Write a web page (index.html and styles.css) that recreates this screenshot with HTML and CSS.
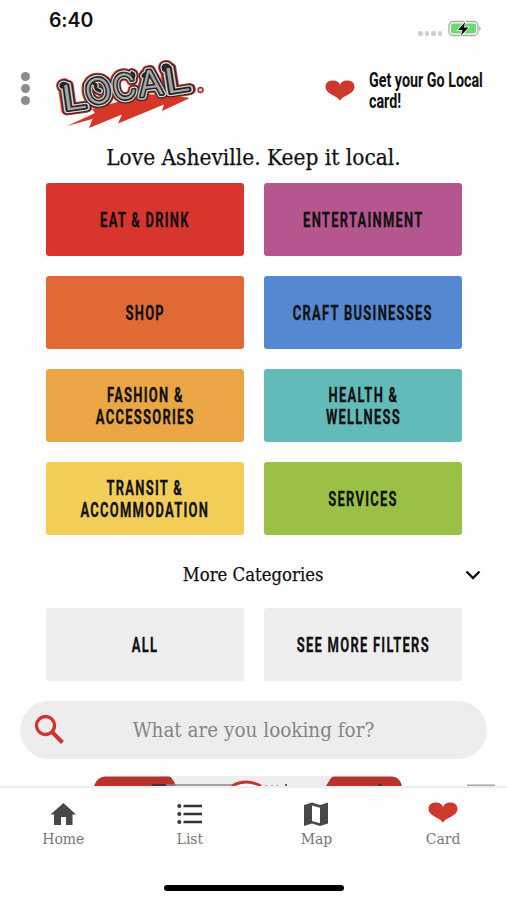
FILE: index.html
```html
<!DOCTYPE html>
<html lang="en">
<head>
<meta charset="utf-8">
<title>Go Local Asheville</title>
<link rel="stylesheet" href="styles.css">
</head>
<body>
<div class="status">
  <span class="clock">6:40</span>
  <div class="status-icons">
    <span class="signal"><i></i><i></i><i></i><i></i></span>
    <svg class="battery" width="34" height="18" viewBox="0 0 34 18"><rect x="1" y="1.500" width="29" height="14" rx="4" fill="#fff" stroke="#aaa" stroke-width="1.300"/><rect x="3" y="3.500" width="25" height="10" rx="2" fill="#6bdb6d"/><path d="M31.500 6q2 2.500 0 5z" fill="#777"/><path d="M17 2 10 10h4.500L13 15.500 20.500 7.500H16z" fill="#000" stroke="#fff" stroke-width="1.600" paint-order="stroke"/></svg>
  </div>
</div>
<header class="header">
  <div class="dots"><i></i><i></i><i></i></div>
  <svg class="logo" width="154" height="76" viewBox="0 0 154 76" role="img" aria-label="Local">
    <path d="M15 70 43 57 40 53 95 38 136 41.500 137 42.500 110 55 112 48.500 66 67.500 70 58.500 37 72 40.500 63z" fill="#d53626"/>
    <defs>
      <g id="wordmark">
        <text transform="translate(11.500 55) rotate(-8)" textLength="25" lengthAdjust="spacingAndGlyphs">L</text>
        <path d="M15 34Q15 26.500 11 27.500 8 28.500 9.500 31"/>
        <text transform="translate(35.500 50) rotate(-12)" textLength="27" lengthAdjust="spacingAndGlyphs">O</text>
        <path d="M48 35Q42 33 44 29 39 24 35 29"/>
        <text transform="translate(62.500 45) rotate(-10)" textLength="24" lengthAdjust="spacingAndGlyphs">C</text>
        <path d="M81 22q2-4-1-5"/>
        <text transform="translate(87.500 41) rotate(-7)" textLength="25" lengthAdjust="spacingAndGlyphs">A</text>
        <path d="M97 18Q93 16 91 20"/>
        <text transform="translate(114 38) rotate(-9)" textLength="26" lengthAdjust="spacingAndGlyphs">L</text>
        <path d="M117.500 19Q119 9 114 9 109.500 9.500 112 14"/>
      </g>
    </defs>
    <use href="#wordmark" class="mark-red"/>
    <use href="#wordmark" class="mark-edge"/>
    <use href="#wordmark" class="mark-light"/>
    <use href="#wordmark" class="mark-black"/>
    <use href="#wordmark" class="mark-core"/>
    <circle cx="148.500" cy="34" r="2.500" fill="#ccc" stroke="#a62e2b" stroke-width="1.400"/>
  </svg>
  <div class="promo">
    <svg class="heart" width="30" height="21" viewBox="0 0 30 21"><path d="M15 21C13 15.500.500 14.500.500 7 .500 1.500 5 .500 8 .500c4 0 6 1.500 7 4.500 1-3 3-4.500 7-4.500 3 0 7.500 1 7.500 6.500C29.500 14.500 17 15.500 15 21z" fill="#ce392d"/></svg>
    <p class="promo-text"><span>Get your Go Local</span><span>card!</span></p>
  </div>
</header>
<h1 class="tagline"><span>Love Asheville. Keep it local.</span></h1>
<main class="grid">
  <button class="tile red"><span>EAT &amp; DRINK</span></button>
  <button class="tile pink"><span>ENTERTAINMENT</span></button>
  <button class="tile orange"><span>SHOP</span></button>
  <button class="tile blue"><span>CRAFT BUSINESSES</span></button>
  <button class="tile amber"><span>FASHION &amp;<br>ACCESSORIES</span></button>
  <button class="tile teal"><span>HEALTH &amp;<br>WELLNESS</span></button>
  <button class="tile yellow"><span>TRANSIT &amp;<br>ACCOMMODATION</span></button>
  <button class="tile green"><span>SERVICES</span></button>
</main>
<div class="more"><span class="more-label">More Categories</span>
  <svg class="chevron" width="16" height="10" viewBox="0 0 16 10"><path d="M1.500 1.500 8 8l6.500-6.500" fill="none" stroke="#111" stroke-width="2.400"/></svg>
</div>
<div class="grid">
  <button class="tile gray"><span>ALL</span></button>
  <button class="tile gray"><span>SEE MORE FILTERS</span></button>
</div>
<div class="search">
  <svg class="glass" width="30" height="30" viewBox="0 0 30 30" fill="none" stroke="#d0342e"><circle cx="10.500" cy="10.500" r="9" stroke-width="3.300"/><path d="m17 17 10.500 10.500" stroke-width="4"/></svg>
  <span class="placeholder">What are you looking for?</span>
</div>
<svg class="peek" width="507" height="10" viewBox="0 0 507 10"><path d="M160 0h175v10H160z" fill="#eee"/><path d="M94 10Q97 1 105 .500h64q3 0 7 9.500zM326 10l5-8q1-1.500 3-1.500h58q8 .500 10 9.500z" fill="#b8332c"/><path d="M152 9h80" stroke="#888" stroke-width="1.600"/><path d="M152 9h14" stroke="#433" stroke-width="2"/><path d="M232 10q14-8 29 0" fill="#fff" stroke="#bd3932" stroke-width="2.800"/><path d="M265 9.500h2m4 0h2m3 0h2" stroke="#aaa"/><path d="M285 9h2M378 9h4" stroke="#333" stroke-width="1.500"/><path d="M467 9.200h28" stroke="#aaa" stroke-width="1.600"/></svg>
<nav class="tabs">
  <a class="tab"><svg width="28" height="26" viewBox="0 0 28 26"><path d="M14.500 2 27 13.500h-3.500V24H17v-8h-5v8H5V13.500H1.500z" fill="#484845"/></svg><span>Home</span></a>
  <a class="tab"><svg width="28" height="26" viewBox="0 0 28 26"><path d="M7.500 5H26M7.500 13H26M7.500 21H26" stroke="#333" stroke-width="2.600"/><g fill="#333"><circle cx="3.300" cy="5" r="2"/><circle cx="3.300" cy="13" r="2"/><circle cx="3.300" cy="21" r="2"/></g></svg><span>List</span></a>
  <a class="tab"><svg width="28" height="26" viewBox="0 0 28 26"><path fill-rule="evenodd" d="m2 4 8-2.500 8 2.500L26 1.500v21L18 25l-8-2.500L2 25zM10 4.500V20l8 2.300V6.800z" fill="#484844"/></svg><span>Map</span></a>
  <a class="tab"><svg class="tab-heart" width="30" height="26" viewBox="0 -1 30 26"><path d="M15 21C13 15.500.500 14.500.500 7 .500 1.500 5 .500 8 .500c4 0 6 1.500 7 4.500 1-3 3-4.500 7-4.500 3 0 7.500 1 7.500 6.500C29.500 14.500 17 15.500 15 21z" fill="#ce392d"/></svg><span>Card</span></a>
</nav>
<div class="home-indicator"></div>
</body>
</html>
```

FILE: styles.css
```css
* { box-sizing: border-box; }
body { margin: 0; width: 507px; height: 900px; overflow: hidden; background: #fefefe; color: #111; display: flex; flex-direction: column; font-family: "DejaVu Serif", serif; }
.status { height: 56px; flex: none; display: flex; justify-content: space-between; padding: 9px 25px 0 49px; }
.clock { font: 600 19.500px/23px Inter, sans-serif; letter-spacing: -.1px; }
.status-icons { display: flex; gap: 6px; padding-top: 11px; }
.signal { display: flex; gap: 2px; padding-top: 11px; }
.signal i { width: 4.500px; height: 4.500px; border-radius: 50%; background: #ccc; }
.header { height: 86px; flex: none; display: flex; align-items: flex-start; padding-left: 21px; }
.dots { width: 9px; display: flex; flex-direction: column; gap: 3px; padding-top: 16px; }
.dots i { width: 9px; height: 9px; border-radius: 50%; background: #8c8c8c; }
.logo { margin: 0 0 0 22px; font: 300 35px Inter, sans-serif; overflow: visible; stroke-linejoin: round; stroke-linecap: round; }
.logo defs path { fill: none; }
.mark-red { fill: #c82e29; stroke: #c82e29; stroke-width: 10; }
.mark-edge { fill: #292525; stroke: #292525; stroke-width: 8; }
.mark-light { fill: #d8d6d2; stroke: #d8d6d2; stroke-width: 5.800; }
.mark-black { fill: #252323; stroke: #252323; stroke-width: 3.200; }
.mark-core { fill: #aaa8a4; stroke: none; }
.promo { display: flex; margin-left: 119px; }
.heart { margin-top: 24px; }
.promo-text { margin: 14px 0 0 14px; width: 118px; font: bold 14.300px/21px Roboto, sans-serif; white-space: nowrap; }
.promo-text span { display: block; height: 21px; transform: scaleY(1.38); }
.tagline { margin: 0; height: 41px; flex: none; font-size: 22px; line-height: 30px; font-weight: 400; text-align: center; white-space: nowrap; -webkit-text-stroke: .25px #111; }
.tagline span { display: inline-block; transform: translateY(.5px) scaleX(.918); }
.grid { display: grid; grid-template-columns: 198px 198px; grid-auto-rows: 73px; gap: 20px; padding-left: 46px; flex: none; }
.tile { display: flex; justify-content: center; align-items: center; border: 0; border-radius: 3px; padding: 0; color: #111; font: bold 20.500px/22px Roboto, sans-serif; letter-spacing: 2px; white-space: nowrap; -webkit-text-stroke: .3px #111; }
.tile span { display: block; transform: scaleX(.632); }
.red { background: #d8352f; }
.pink { background: #b6568f; }
.orange { background: #e26a36; }
.blue { background: #5488d1; }
.amber { background: #eaa544; }
.teal { background: #62bbb8; }
.yellow { background: #f2ce59; }
.green { background: #9ac146; }
.gray { background: #eee; }
.more { height: 73px; flex: none; display: grid; grid-template-columns: 465px 16px; align-items: center; padding-top: 6px; }
.more-label { padding-left: 45px; text-align: center; font-size: 18px; transform: scaleX(.917); -webkit-text-stroke: .25px #111; }
.search { height: 58px; flex: none; margin: 20px 20px 0; border-radius: 29px; background: #ededed; display: flex; align-items: center; padding-left: 15px; }
.placeholder { flex: 1; margin-right: 45px; text-align: center; font-size: 21px; color: #858585; white-space: nowrap; transform: scaleX(.876); }
.peek { flex: none; margin-top: 17px; }
.tabs { height: 99px; flex: none; display: grid; grid-template-columns: repeat(4, 126.600px); border-top: 2px solid #eee; background: #fefefe; }
.tab { display: flex; flex-direction: column; align-items: center; padding-top: 13px; color: #777; font-size: 14px; line-height: 24px; }
.tab svg { flex: none; }
.home-indicator { width: 180px; height: 6px; flex: none; border-radius: 3px; background: #000; margin-left: 164px; }
```
